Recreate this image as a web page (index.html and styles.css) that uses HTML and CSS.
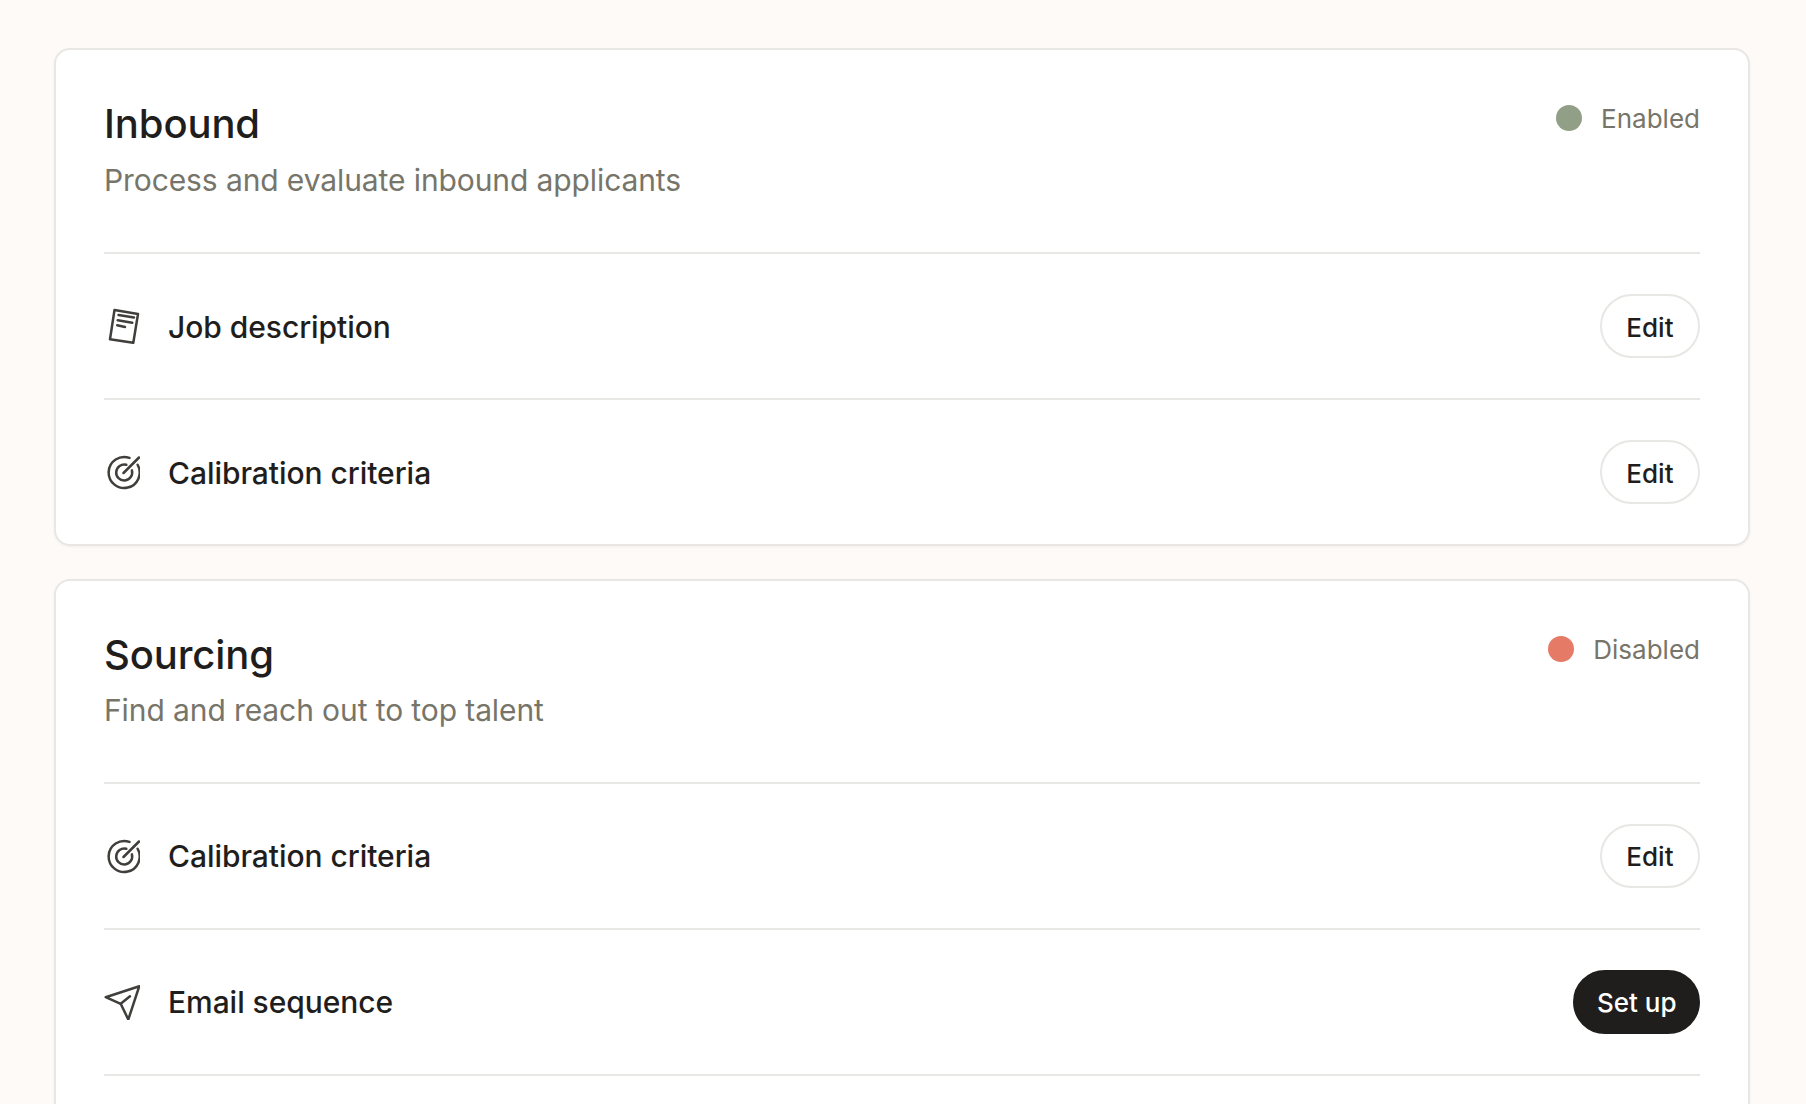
FILE: index.html
```html
<!DOCTYPE html>
<html lang="en">
<head>
<meta charset="utf-8">
<title>Agents</title>
<link rel="stylesheet" href="styles.css">
</head>
<body>
<main class="page">
  <section class="card">
    <header class="card-head">
      <div>
        <h2 class="title">Inbound</h2>
        <p class="subtitle">Process and evaluate inbound applicants</p>
      </div>
      <div class="status"><span class="dot dot-on"></span><span>Enabled</span></div>
    </header>
    <div class="row">
      <svg class="icon" viewBox="0 0 36 36"><path d="M10.5 2 34 6 29.3 34.8 6 31.3Z"/><path d="M14.5 7 30 9.6M13.7 12.2 28.3 14.8M13.2 17.2 21 19"/></svg>
      <span class="label">Job description</span>
      <button class="btn">Edit</button>
    </div>
    <div class="row">
      <svg class="icon" viewBox="0 0 36 36"><path d="M25.5 3.94A15.5 15.5 0 1 0 33.6 10.75"/><path d="M22.3 10.8A8 8 0 1 0 27.9 16.4"/><path d="M19.5 19 35 3.5"/></svg>
      <span class="label">Calibration criteria</span>
      <button class="btn">Edit</button>
    </div>
  </section>
  <section class="card card-long">
    <header class="card-head">
      <div>
        <h2 class="title">Sourcing</h2>
        <p class="subtitle">Find and reach out to top talent</p>
      </div>
      <div class="status"><span class="dot dot-off"></span><span>Disabled</span></div>
    </header>
    <div class="row">
      <svg class="icon" viewBox="0 0 36 36"><path d="M25.5 3.94A15.5 15.5 0 1 0 33.6 10.75"/><path d="M22.3 10.8A8 8 0 1 0 27.9 16.4"/><path d="M19.5 19 35 3.5"/></svg>
      <span class="label">Calibration criteria</span>
      <button class="btn">Edit</button>
    </div>
    <div class="row row-last">
      <svg class="icon" viewBox="0 0 36 36"><path d="M35.3 2.2 1.7 13.2 16.7 19.8 24.3 35.5Z"/><path d="M16.7 19.8 26 12.2"/></svg>
      <span class="label">Email sequence</span>
      <button class="btn btn-dark">Set up</button>
    </div>
  </section>
</main>
</body>
</html>
```
FILE: styles.css
```css
* { box-sizing: border-box; }
html, body { margin: 0; height: 1104px; overflow: hidden; }
body { background: #fefaf7; color: #1f1e1c; font-family: Inter, "Liberation Sans", sans-serif; }
.page { display: flex; flex-direction: column; gap: 32.5px; padding: 48px 56px 0 54px; }
.card { background: #fff; border: 2px solid #e8e7e4; border-radius: 16px; padding: 0 48px; box-shadow: 0 1px 3px rgba(30,30,28,.05); }
.card-long { min-height: 640px; }
.card-head { display: flex; justify-content: space-between; align-items: flex-start; height: 202px; padding-top: 50px; }
.card-long .card-head { height: 201px; }
.title { margin: 0; font-size: 40px; line-height: 48px; font-weight: 500; letter-spacing: -0.1px; }
.subtitle { margin: 12px 0 0; font-size: 30px; line-height: 40px; color: #77756a; font-weight: 400; letter-spacing: -0.1px; }
.card-long .subtitle { margin-top: 11px; }
.status { display: flex; align-items: center; gap: 19px; font-size: 26px; line-height: 36px; color: #77756a; margin-top: 1px; }
.dot { width: 26px; height: 26px; border-radius: 50%; margin-top: -2px; }
.dot-on { background: #929f87; }
.dot-off { background: #e57a66; }
.row { display: flex; align-items: center; gap: 28px; padding: 40px 0; border-top: 2px solid #e8e7e4; }
.row-last { border-bottom: 2px solid #e8e7e4; }
.icon { width: 36px; height: 36px; fill: none; stroke: #403f3b; stroke-width: 2.5; stroke-linecap: round; stroke-linejoin: round; flex: none; }
.label { flex: 1; padding-top: 1px; font-size: 30px; font-weight: 500; letter-spacing: -0.05px; }
.btn { height: 64px; padding: 2px 24.5px 0; border: 2px solid #e8e7e4; border-radius: 32px; background: #fff; color: #1f1e1c; font: 500 26px Inter, "Liberation Sans", sans-serif; }
.btn-dark { padding: 2px 21.5px 0; background: #1f1e1c; border-color: #1f1e1c; color: #fff; }
```
